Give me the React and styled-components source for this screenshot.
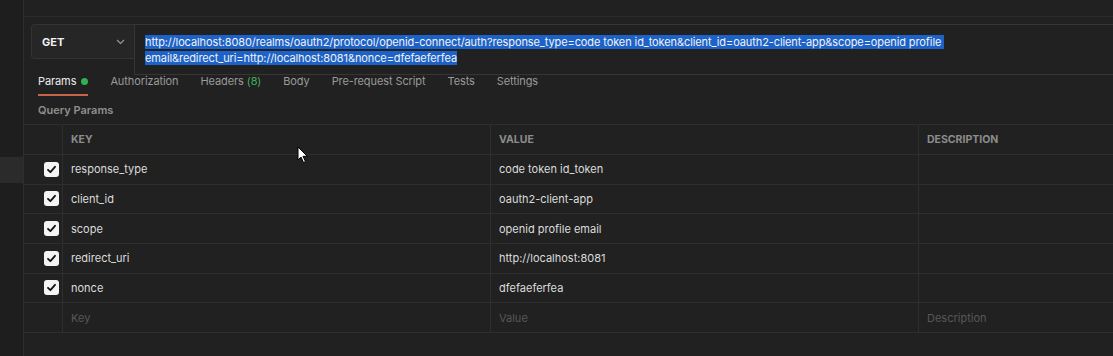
import React from 'react';
import styled, { createGlobalStyle } from 'styled-components';

const GlobalStyle = createGlobalStyle`
  html, body {
    margin: 0;
    padding: 0;
    background: #212121;
    font-family: Inter, "Noto Sans", sans-serif;
    -webkit-font-smoothing: antialiased;
  }
`;

const Page = styled.div`
  display: flex;
  width: 1113px;
  height: 356px;
  overflow: hidden;
  background: #212121;
  position: relative;
`;

const Sidebar = styled.div`
  width: 24px;
  flex: none;
  border-right: 1px solid #2e2e2e;
  background: #1e1e1e;
  padding-top: 157px;
  box-sizing: border-box;
`;

const SidebarItem = styled.div`
  height: 26px;
  background: #2b2b2b;
`;

const Main = styled.div`
  flex: 1;
  display: flex;
  flex-direction: column;
  min-width: 0;
`;

const TopStrip = styled.div`
  height: 16px;
  border-bottom: 1px solid #2a2a2a;
`;

const RequestBar = styled.div`
  display: flex;
  align-items: flex-start;
  padding: 7px 0 0 7px;
`;

const MethodBox = styled.div`
  width: 103px;
  height: 35px;
  box-sizing: border-box;
  display: flex;
  align-items: center;
  justify-content: space-between;
  padding: 0 9px 0 10px;
  background: #262626;
  border: 1px solid #333;
  border-right: none;
  border-radius: 4px 0 0 4px;
  color: #f0f0f0;
  font-size: 11px;
  font-weight: 700;
`;

const UrlBox = styled.div`
  flex: 1;
  height: 51px;
  box-sizing: border-box;
  border: 1px solid #363636;
  border-right: none;
  padding: 9px 10px 0 10px;
  font-size: 11px;
  line-height: 16px;
  letter-spacing: -0.1px;
  color: #e8e8e8;
  white-space: nowrap;
`;

const Selected = styled.span`
  background: #1c62c8;
  color: #f2f2f2;
`;

const Tabs = styled.div`
  display: flex;
  gap: 22px;
  padding: 0 0 0 14px;
  height: 21px;
`;

const Tab = styled.div`
  display: flex;
  align-items: flex-start;
  gap: 5px;
  font-size: 11px;
  line-height: 13px;
  letter-spacing: -0.1px;
  color: ${p => (p.$active ? '#ececec' : '#9a9a9a')};
  border-bottom: 2px solid ${p => (p.$active ? '#c4654a' : 'transparent')};
  box-sizing: border-box;
  height: 21px;
`;

const Dot = styled.span`
  width: 7px;
  height: 7px;
  border-radius: 50%;
  background: #2fb152;
  margin-top: 3px;
`;

const Count = styled.span`
  color: #3fae5a;
`;

const SectionLabel = styled.div`
  padding: 7px 0 0 14px;
  height: 28px;
  box-sizing: border-box;
  font-size: 11px;
  font-weight: 600;
  color: #8f8f8f;
`;

const Table = styled.div`
  display: grid;
  grid-template-columns: 39px 428px 428px 1fr;
  border-top: 1px solid #2e2e2e;
`;

const Cell = styled.div`
  height: ${p => (p.$head ? '29px' : '28.67px')};
  border-bottom: 1px solid #2e2e2e;
  border-right: ${p => (p.$last ? 'none' : '1px solid #2e2e2e')};
  display: flex;
  align-items: center;
  padding-left: ${p => (p.$check ? '20px' : '8px')};
  font-size: ${p => (p.$head ? '10.5px' : '11px')};
  font-weight: ${p => (p.$head ? 700 : 400)};
  color: ${p => (p.$head ? '#8c8c8c' : p.$placeholder ? '#575757' : '#dcdcdc')};
  overflow: hidden;
  white-space: nowrap;
`;

const Checkbox = styled.div`
  width: 15px;
  height: 15px;
  border-radius: 3px;
  background: #f4f4f4;
  display: flex;
  align-items: center;
  justify-content: center;
`;

const Cursor = styled.svg`
  position: absolute;
  left: 297px;
  top: 146px;
`;

const params = [
  { key: 'response_type', value: 'code token id_token' },
  { key: 'client_id', value: 'oauth2-client-app' },
  { key: 'scope', value: 'openid profile email' },
  { key: 'redirect_uri', value: 'http://localhost:8081' },
  { key: 'nonce', value: 'dfefaeferfea' }
];

const tabs = ['Authorization', 'Headers', 'Body', 'Pre-request Script', 'Tests', 'Settings'];

const Check = () => (
  <Checkbox>
    <svg width="11" height="11" viewBox="0 0 11 11">
      <path d="M2 5.8 L4.4 8.2 L9 2.8" fill="none" stroke="#111" strokeWidth="1.8" strokeLinecap="round" strokeLinejoin="round" />
    </svg>
  </Checkbox>
);

export default function App() {
  return (
    <Page>
      <GlobalStyle />
      <Sidebar>
        <SidebarItem />
      </Sidebar>
      <Main>
        <TopStrip />
        <RequestBar>
          <MethodBox>
            GET
            <svg width="9" height="6" viewBox="0 0 9 6">
              <path d="M1 1 L4.5 4.5 L8 1" fill="none" stroke="#9a9a9a" strokeWidth="1.1" />
            </svg>
          </MethodBox>
          <UrlBox>
            <Selected>
              http://localhost:8080/realms/oauth2/protocol/openid-connect/auth?response_type=code token id_token&amp;client_id=oauth2-client-app&amp;scope=openid profile&nbsp;
            </Selected>
            <br />
            <Selected>email&amp;redirect_uri=http://localhost:8081&amp;nonce=dfefaeferfea</Selected>
          </UrlBox>
        </RequestBar>
        <Tabs>
          <Tab $active>
            Params
            <Dot />
          </Tab>
          {tabs.map(t => (
            <Tab key={t}>
              {t === 'Headers' ? (
                <span>
                  Headers <Count>(8)</Count>
                </span>
              ) : (
                t
              )}
            </Tab>
          ))}
        </Tabs>
        <SectionLabel>Query Params</SectionLabel>
        <Table>
          <Cell $head $check />
          <Cell $head>KEY</Cell>
          <Cell $head>VALUE</Cell>
          <Cell $head $last>DESCRIPTION</Cell>
          {params.map(p => (
            <React.Fragment key={p.key}>
              <Cell $check>
                <Check />
              </Cell>
              <Cell>{p.key}</Cell>
              <Cell>{p.value}</Cell>
              <Cell $last />
            </React.Fragment>
          ))}
          <Cell $check />
          <Cell $placeholder>Key</Cell>
          <Cell $placeholder>Value</Cell>
          <Cell $placeholder $last>Description</Cell>
        </Table>
      </Main>
      <Cursor width="12" height="18" viewBox="0 0 12 18">
        <path d="M1 1 L1 14 L4 11 L6.5 16.5 L8.5 15.6 L6 10.3 L10.3 10.3 Z" fill="#fff" stroke="#000" strokeWidth="1" />
      </Cursor>
    </Page>
  );
}
